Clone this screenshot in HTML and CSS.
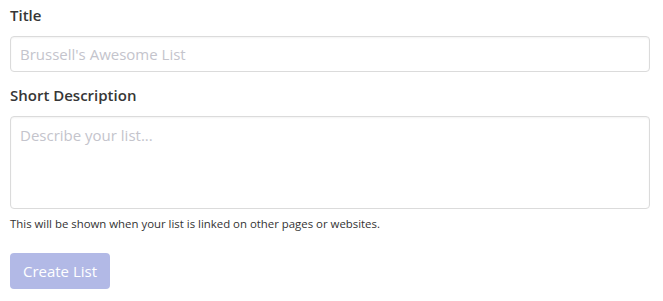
FILE: index.html
```html
<!DOCTYPE html>
<html>
<head>
<meta charset="utf-8">
<link rel="stylesheet" href="styles.css">
</head>
<body>
<form class="form">
  <div class="field">
    <label class="label" for="title">Title</label>
    <input class="input" id="title" type="text" placeholder="Brussell's Awesome List">
  </div>
  <div class="field">
    <label class="label" for="desc">Short Description</label>
    <textarea class="textarea" id="desc" placeholder="Describe your list..."></textarea>
    <p class="help">This will be shown when your list is linked on other pages or websites.</p>
  </div>
  <button class="button" type="button">Create List</button>
</form>
</body>
</html>
```
FILE: styles.css
```css
html, body {
  margin: 0;
  padding: 0;
  background: #fff;
}
.form {
  padding: 4px 13px 0 10px;
  font-family: "Open Sans", "Noto Sans", sans-serif;
  color: #333;
  display: flex;
  flex-direction: column;
}
.field {
  display: flex;
  flex-direction: column;
}
.label {
  font-size: 15px;
  font-weight: 600;
  line-height: 22px;
  margin-bottom: 10px;
  color: #363636;
}
.input, .textarea {
  box-sizing: border-box;
  width: 640px;
  border: 1px solid #dbdbdb;
  border-radius: 4px;
  box-shadow: inset 0 1px 2px rgba(10,10,10,0.05);
  font-family: inherit;
  font-size: 15px;
  color: #333;
  padding: 0 9px;
  outline: none;
  background: #fff;
}
.input {
  height: 36px;
  margin-bottom: 12px;
}
.textarea {
  height: 93px;
  resize: none;
  padding-top: 7px;
  line-height: 22px;
}
.input::placeholder, .textarea::placeholder {
  color: #c4c4cc;
}
.help {
  margin: 7px 0 0;
  font-size: 11.4px;
  line-height: 16px;
  color: #333;
}
.button {
  margin-top: 21px;
  align-self: flex-start;
  width: 100px;
  height: 36px;
  border: none;
  border-radius: 4px;
  background: #b2b9e6;
  color: #fff;
  font-family: inherit;
  font-size: 15px;
  padding: 0;
}
```
